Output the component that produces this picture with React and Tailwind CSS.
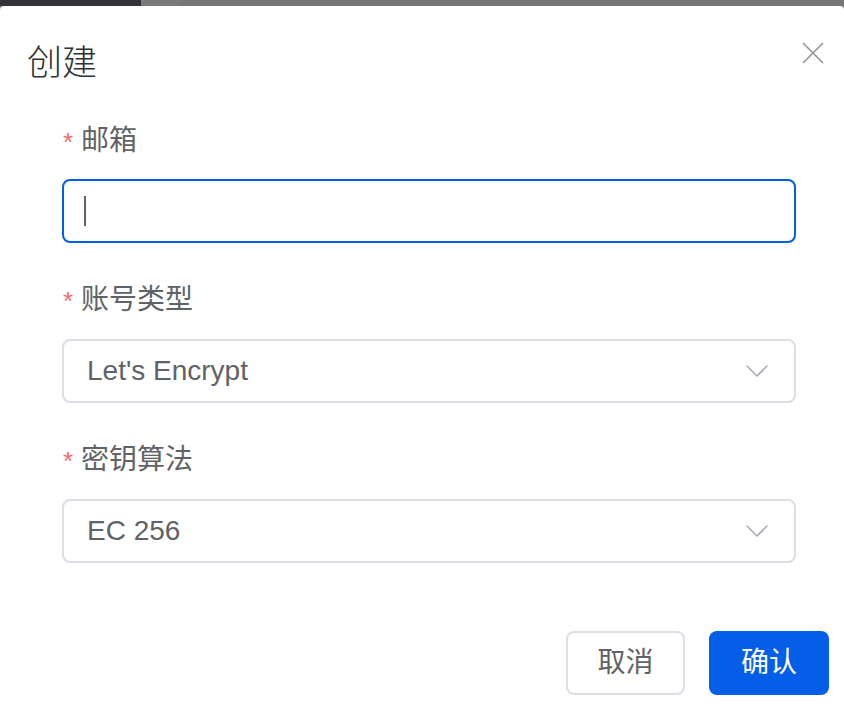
import React from 'react';

const font = { fontFamily: '"Liberation Sans", "Noto Sans CJK SC", sans-serif' };

const Label = ({ text }) => (
  <div className="flex items-center h-[40px] text-[28px] text-[#606266]">
    <span className="text-[#f56c6c] text-[26px] w-[19px] pl-[1px] leading-none mt-[2px]">*</span>
    <span>{text}</span>
  </div>
);

const Chevron = () => (
  <svg width="22" height="14" viewBox="0 0 22 14" fill="none">
    <polyline points="1,2 11,12 21,2" stroke="#a8abb2" strokeWidth="1.6" strokeLinejoin="round" strokeLinecap="round" />
  </svg>
);

const Select = ({ value }) => (
  <div className="h-[64px] border-2 border-[#dcdfe6] rounded-[8px] flex items-center justify-between pl-[23px] pr-[26px] text-[28px] text-[#606266]">
    <span>{value}</span>
    <Chevron />
  </div>
);

export default function App() {
  return (
    <div className="h-[722px] flex flex-col bg-[#777777]" style={font}>
      <div className="h-[6px] flex">
        <div className="w-[141px] bg-[#343438]"></div>
        <div className="w-[40px] bg-[#7a7a7a]"></div>
        <div className="flex-1 bg-[#767676]"></div>
      </div>
      <div className="flex-1 bg-white rounded-t-[4px] flex flex-col">
        <div className="flex items-start justify-between pt-[37px] pl-[27px] pr-[20px]">
          <div className="h-[40px] leading-[40px] text-[35px] text-[#303133] font-light">创建</div>
          <svg width="22" height="22" viewBox="0 0 22 22" className="mt-[-1px]">
            <line x1="1" y1="1" x2="21" y2="21" stroke="#909399" strokeWidth="1.6" />
            <line x1="21" y1="1" x2="1" y2="21" stroke="#909399" strokeWidth="1.6" />
          </svg>
        </div>
        <div className="flex flex-col mx-[62px] mt-[38px] w-[734px]">
          <Label text="邮箱" />
          <div className="mt-[18px] h-[64px] border-2 border-[#055ee8] rounded-[8px] flex items-center pl-[20px]">
            <div className="w-[2px] h-[30px] bg-[#606266]"></div>
          </div>
          <div className="mt-[37px]">
            <Label text="账号类型" />
          </div>
          <div className="mt-[19px]">
            <Select value="Let's Encrypt" />
          </div>
          <div className="mt-[37px]">
            <Label text="密钥算法" />
          </div>
          <div className="mt-[19px]">
            <Select value="EC 256" />
          </div>
        </div>
        <div className="flex justify-end gap-[24px] pr-[15px] mt-[68px]">
          <button className="h-[64px] w-[119px] border-2 border-[#dcdfe6] rounded-[8px] bg-white text-[28px] text-[#606266]">取消</button>
          <button className="h-[64px] w-[120px] rounded-[8px] bg-[#055ee8] text-[28px] text-white">确认</button>
        </div>
      </div>
    </div>
  );
}
